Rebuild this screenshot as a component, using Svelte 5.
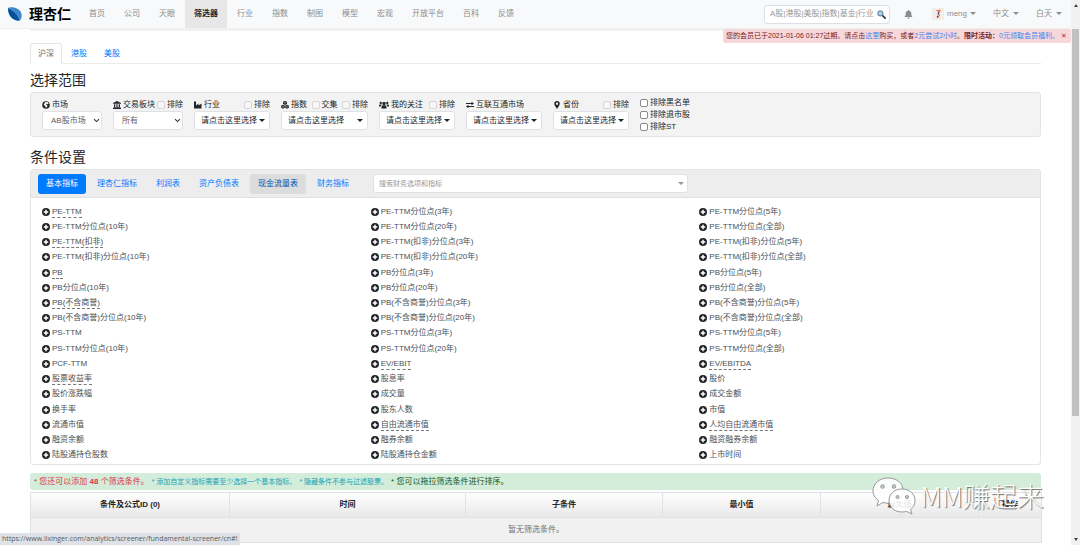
<script>
    const navItems = ['首页', '公司', '天眼', '筛选器', '行业', '指数', '制图', '模型', '宏观', '开放平台', '百科', '反馈'];
    const markets = ['沪深', '港股', '美股'];
    const groups = ['基本指标', '理杏仁指标', '利润表', '资产负债表', '现金流量表', '财务指标'];
    const placeholder = '请点击这里选择';

    const filters = [
        { id: 'market', icon: 'globe', label: '市场', checks: [], options: ['AB股市场', 'A股市场', 'B股市场'], size: 'w60' },
        { id: 'board', icon: 'bank', label: '交易板块', checks: ['排除'], options: ['所有', '主板', '创业板'], size: 'w70' },
        { id: 'industry', icon: 'industry', label: '行业', checks: ['排除'], size: 'w76' },
        { id: 'index', icon: 'cubes', label: '指数', checks: ['交集', '排除'], size: 'w87' },
        { id: 'follow', icon: 'users', label: '我的关注', checks: ['排除'], size: 'w76' },
        { id: 'connect', icon: 'exchange', label: '互联互通市场', checks: [], size: 'w76' },
        { id: 'province', icon: 'pin', label: '省份', checks: ['排除'], size: 'w76' }
    ];
    const excludes = ['排除黑名单', '排除退市股', '排除ST'];

    // a leading * marks an indicator that has a tooltip
    const indicators = [
        '*PE-TTM', 'PE-TTM分位点(3年)', 'PE-TTM分位点(5年)',
        'PE-TTM分位点(10年)', 'PE-TTM分位点(20年)', 'PE-TTM分位点(全部)',
        '*PE-TTM(扣非)', 'PE-TTM(扣非)分位点(3年)', 'PE-TTM(扣非)分位点(5年)',
        'PE-TTM(扣非)分位点(10年)', 'PE-TTM(扣非)分位点(20年)', 'PE-TTM(扣非)分位点(全部)',
        '*PB', 'PB分位点(3年)', 'PB分位点(5年)',
        'PB分位点(10年)', 'PB分位点(20年)', 'PB分位点(全部)',
        '*PB(不含商誉)', 'PB(不含商誉)分位点(3年)', 'PB(不含商誉)分位点(5年)',
        'PB(不含商誉)分位点(10年)', 'PB(不含商誉)分位点(20年)', 'PB(不含商誉)分位点(全部)',
        'PS-TTM', 'PS-TTM分位点(3年)', 'PS-TTM分位点(5年)',
        'PS-TTM分位点(10年)', 'PS-TTM分位点(20年)', 'PS-TTM分位点(全部)',
        'PCF-TTM', '*EV/EBIT', '*EV/EBITDA',
        '*股票收益率', '股息率', '股价',
        '股价涨跌幅', '成交量', '成交金额',
        '换手率', '股东人数', '市值',
        '流通市值', '*自由流通市值', '*人均自由流通市值',
        '融资余额', '融券余额', '融资融券余额',
        '陆股通持仓股数', '陆股通持仓金额', '上市时间'
    ];

    const columns = ['条件及公式ID (0)', '时间', '子条件', '最小值', '最大值', '操作'];

    let market = $state('沪深');
    let group = $state('基本指标');
    let showAlert = $state(true);
</script>

{#snippet icon(name)}
    <svg class="icon" class:wide={name === 'users'} viewBox="0 0 16 16" aria-hidden="true">
        {#if name === 'globe'}
            <circle cx="8" cy="8" r="7.6" />
            <path d="M7 2l4 0 2.500 3-2 1.500-2-1-1.500 2 3 1.500-1 3-2.500 2-1-4-3-2 1-3z" fill="#f3f3f3" />
        {:else if name === 'bank'}
            <path d="M8 0l8 4v1.500H0V4zM2 6.500h2.500V12h1.500V6.500h4V12h1.500V6.500H14V12h1v1.500H1V12h1zM7.200 7v5h1.600V7zM0 14h16v2H0z" />
        {:else if name === 'industry'}
            <path d="M0 1h4v8l5-4v4l6-4v10H0z" />
        {:else if name === 'cubes'}
            <path d="M8 0l4 1.700v4.500L8 8 4 6.200V1.700zM4 7.300L7.600 9v4.700L4 15.500.3 13.700V9zM12 7.300L15.700 9v4.700L12 15.500l-3.600-1.800V9z" />
            <path d="M5 2.200l3 1.300 3-1.300M8 3.500V7M1.300 9.500L4 10.800l2.700-1.300M4 10.800V14M9.300 9.500l2.700 1.300 2.700-1.300M12 10.800V14" fill="none" stroke="#f3f3f3" stroke-width=".7" />
        {:else if name === 'users'}
            <circle cx="8" cy="5" r="3.300" />
            <path d="M3 15v-3q0-3 3-3.500h4q3 .5 3 3.500v3z" />
            <circle cx="1.500" cy="4" r="2.300" />
            <circle cx="14.500" cy="4" r="2.300" />
            <path d="M-2 11V8.500Q-1.500 7 0 7h3.500Q1.500 9 1.500 11zM18 11V8.500Q17.500 7 16 7h-3.500q2 2 2 4z" />
        {:else if name === 'exchange'}
            <path d="M0 4h11V1.500L16 5l-5 3.500V6H0zM16 10H5V7.500L0 11l5 3.500V12h11z" />
        {:else if name === 'pin'}
            <path fill-rule="evenodd" d="M8 0a5.500 5.500 0 0 1 5.500 5.500C13.500 9 9.500 13 8 16 6.500 13 2.500 9 2.500 5.500A5.500 5.500 0 0 1 8 0zm0 3.200a2.300 2.300 0 1 0 0 4.600 2.300 2.300 0 0 0 0-4.600z" />
        {:else if name === 'plus'}
            <path fill-rule="evenodd" d="M8 0a8 8 0 1 0 0 16A8 8 0 0 0 8 0zM6.500 3.500h3v3h3v3h-3v3h-3v-3h-3v-3h3z" />
        {:else if name === 'bell'}
            <path d="M7 0h2v1.500c3 .6 4 2.500 4 5 0 3 .8 4.500 2.500 6H.5C2.200 11 3 9.500 3 6.500c0-2.500 1-4.400 4-5zM6 13.500h4q-.5 2.500-2 2.500t-2-2.500z" />
        {/if}
    </svg>
{/snippet}

{#snippet check(id, label, disabled)}
    <span class="check">
        <input type="checkbox" {id} {disabled} />
        <label for={id}>{label}</label>
    </span>
{/snippet}

<div class="window">
    <div class="page">
        <header>
            <a class="brand" href="#home">
                <svg class="logo" viewBox="0 0 16 16" aria-hidden="true">
                    <path d="M0 1C6-1 14 2 15.500 8c.5 3-.5 6-2 7.500C6 16 0 10 0 1z" fill="#3987cc" />
                    <path d="M0 1c0 9 5 14.500 13.500 14.500C12 9 7 4 0 1z" fill="#07509a" />
                    <path d="M0 1c7 3 12 8 13.500 14.500" fill="none" stroke="#8fbde5" stroke-width=".5" />
                </svg>
                理杏仁
            </a>
            <nav>
                {#each navItems as item}
                    <a href="#nav" class:active={item === '筛选器'}>{item}</a>
                {/each}
            </nav>
            <div class="tools">
                <div class="search">
                    <input type="text" aria-label="搜索" placeholder="A股|港股|美股|指数|基金|行业" />
                    <svg viewBox="0 0 16 16" aria-hidden="true">
                        <path d="M9.500 9.500l5 5" stroke="#273746" stroke-width="3" stroke-linecap="round" />
                        <circle cx="6" cy="6" r="4.700" fill="#a3d0ef" stroke="#49647a" stroke-width="1.500" />
                    </svg>
                </div>
                <button class="bell" aria-label="通知">{@render icon('bell')}</button>
                <button class="user">
                    <svg class="avatar" viewBox="0 0 24 24" aria-hidden="true">
                        <rect width="24" height="24" fill="#f1eeea" />
                        <path d="M9 5l6 1-2 6 2 3-4 5M13 8l4-3" fill="none" stroke="#d84a35" stroke-width="2" />
                        <path d="M13 8l-1 5M10 19l2-4" stroke="#3d3778" stroke-width="2" />
                        <circle cx="16" cy="5" r="2" fill="#e99a38" />
                    </svg>
                    meng<i class="caret"></i>
                </button>
                <button class="spaced">中文<i class="caret"></i></button>
                <button class="spaced">白天<i class="caret"></i></button>
            </div>
        </header>

        <div class="notice">
            <div class="strip"></div>
            {#if showAlert}
                <div class="alert" role="alert">
                    <span>您的会员已于2021-01-06 01:27过期。请点击<a href="#buy">这里</a>购买，或者<a href="#try">2元尝试2小时</a>。<b>限时活动：</b><a href="#free">0元领取会员福利。</a></span>
                    <button aria-label="关闭" onclick={() => (showAlert = false)}>✕</button>
                </div>
            {/if}
        </div>

        <main>
            <div class="tabs">
                {#each markets as item}
                    <button class:active={item === market} onclick={() => (market = item)}>{item}</button>
                {/each}
            </div>

            <h2>选择范围</h2>
            <section class="filters">
                {#each filters as f}
                    <div class="filter {f.size}">
                        <div class="filter-head">
                            <label class="name" for={f.id}>{@render icon(f.icon)}{f.label}</label>
                            {#each f.checks as c, i}
                                {@render check(`${f.id}-${i}`, c, true)}
                            {/each}
                        </div>
                        {#if f.options}
                            <div class="select">
                                <select id={f.id}>
                                    {#each f.options as o}
                                        <option>{o}</option>
                                    {/each}
                                </select>
                                <svg viewBox="0 0 10 10" aria-hidden="true"><path d="M1.500 3L5 6.500 8.500 3" /></svg>
                            </div>
                        {:else}
                            <button class="picker" id={f.id}><span>{placeholder}</span><i class="caret"></i></button>
                        {/if}
                    </div>
                {/each}
                <div class="excludes">
                    {#each excludes as e, i}
                        {@render check(`exclude-${i}`, e, false)}
                    {/each}
                </div>
            </section>

            <h2>条件设置</h2>
            <section class="card">
                <div class="card-head">
                    <div class="pills">
                        {#each groups as g}
                            <button class:active={g === group} class:hover={g === '现金流量表'} onclick={() => (group = g)}>{g}</button>
                        {/each}
                    </div>
                    <div class="combo">
                        <input type="text" aria-label="搜索财务选项和指标" placeholder="搜索财务选项和指标" />
                        <i class="caret"></i>
                    </div>
                </div>
                <ul class="indicators">
                    {#each indicators as item}
                        <li>
                            {@render icon('plus')}
                            <a href="#add" class:tip={item[0] === '*'}>{item.replace('*', '')}</a>
                        </li>
                    {/each}
                </ul>
            </section>

            <div class="tips">
                <span class="danger">* 您还可以添加 <b>48</b> 个筛选条件。</span>
                <span class="info">* 添加自定义指标需要至少选择一个基本指标。</span>
                <span class="info">* 隐藏条件不参与过滤股票。</span>
                <span>* 您可以拖拉筛选条件进行排序。</span>
            </div>

            <table>
                <colgroup>
                    <col class="c-name" />
                    <col class="c-time" />
                    <col class="c-sub" />
                    <col class="c-value" />
                    <col class="c-value" />
                    <col class="c-action" />
                </colgroup>
                <thead>
                    <tr>
                        {#each columns as c}
                            <th>{c}</th>
                        {/each}
                    </tr>
                </thead>
                <tbody>
                    <tr><td colspan="6">暂无筛选条件。</td></tr>
                </tbody>
            </table>
        </main>
    </div>

    <div class="scrollbar" aria-hidden="true">
        <i class="arrow up"></i>
        <div class="thumb"></div>
        <i class="arrow"></i>
    </div>

    <div class="status">https://www.lixinger.com/analytics/screener/fundamental-screener/cn#!</div>

    <div class="watermark">
        <svg viewBox="0 0 44 38" aria-hidden="true">
            <path d="M16 1C7 1 1 7 1 14c0 4 2 7 5.500 9.500L5 29l6-3.500c2 .5 3.500.7 5.500.7C25 26 31 20.500 31 13.500S25 1 16 1z" />
            <path d="M30 12c-7.500 0-13 5-13 11.500S22.500 35 30 35c1.500 0 3-.2 4.500-.7L40 37l-1.500-4.500c3-2.200 4.500-5.200 4.500-9C43 17 37.500 12 30 12z" />
            <g class="eyes">
                <circle cx="10.500" cy="9.500" r="1.800" />
                <circle cx="22" cy="9.500" r="1.800" />
                <circle cx="25.500" cy="20" r="1.500" />
                <circle cx="35" cy="20" r="1.500" />
            </g>
        </svg>
        MM赚起来
    </div>
</div>

<style>
    :global(body) {
        margin: 0;
        background: #fff;
    }
    .window, .window * {
        box-sizing: border-box;
    }
    .window {
        position: relative;
        display: flex;
        height: 100vh;
        overflow: hidden;
        font: 8px/12px "Liberation Sans", "Noto Sans CJK SC", sans-serif;
        color: #212529;
        white-space: nowrap;
    }
    .window button, .window input, .window select {
        margin: 0;
        padding: 0;
        font: inherit;
        color: inherit;
        background: none;
        border: 0;
    }
    .window a {
        color: inherit;
        text-decoration: none;
    }
    .page {
        flex: 1;
        min-width: 0;
    }
    .icon {
        flex: none;
        width: 8px;
        height: 8px;
        fill: currentColor;
        overflow: visible;
    }
    .icon.wide {
        margin: 0 1px;
    }
    .caret {
        display: inline-block;
        border: 3px solid transparent;
        border-top-color: currentColor;
        border-bottom: 0;
    }

    /* top bar */
    header {
        display: flex;
        align-items: center;
        height: 28px;
        padding: 0 10px 0 8px;
        background: #f8f9fa;
        color: #8c8d8e;
    }
    .window .brand {
        display: flex;
        align-items: center;
        gap: 7px;
        margin-right: 9px;
        font-size: 14px;
        font-weight: bold;
        color: #000;
    }
    .logo {
        width: 14px;
        height: 14px;
    }
    nav {
        display: flex;
        gap: 1px;
    }
    nav a {
        padding: 0 9px;
        line-height: 28px;
    }
    .window nav a.active {
        background: #e7e7e7;
        color: #222;
        font-weight: bold;
    }
    .tools {
        display: flex;
        align-items: center;
        margin-left: auto;
    }
    .search {
        display: flex;
        align-items: center;
        width: 126px;
        height: 19px;
        padding: 0 3px 0 5px;
        background: #fff;
        border: 1px solid #dcdfe3;
        border-radius: 3px;
    }
    .search input {
        flex: 1;
        min-width: 0;
    }
    .search svg {
        width: 9px;
        height: 9px;
    }
    input::placeholder {
        color: #999;
        opacity: 1;
    }
    .window .bell {
        margin: 0 19px 0 14px;
    }
    .bell .icon {
        width: 9px;
        height: 9px;
    }
    .tools button {
        display: flex;
        align-items: center;
        gap: 3px;
    }
    .window .tools .spaced {
        gap: 4px;
        margin-left: 18px;
    }
    .tools .caret {
        border-width: 3px 3px 0;
        margin: 0 -1px 2px 0;
    }
    .avatar {
        width: 12px;
        height: 12px;
    }

    .notice {
        display: flex;
        height: 15px;
        border-top: 1px solid #eee;
    }
    .strip {
        flex: 1;
        height: 2px;
        margin-left: 30px;
        background: #f2f2f2;
    }
    .alert {
        display: flex;
        align-items: center;
        gap: 2px;
        padding: 0 4px 0 3px;
        background: #f8d7da;
        border-radius: 2px;
        color: #721c24;
        font-size: 7px;
    }
    .window .alert a {
        color: #3a86ee;
    }
    .window .alert button {
        color: #a8333d;
    }

    main {
        padding: 0 30px;
    }
    .tabs {
        display: flex;
        gap: 1px;
        height: 21px;
        border-bottom: 1px solid #e9ebed;
    }
    .window .tabs button {
        height: 21px;
        padding: 0 7px;
        border: 1px solid transparent;
        border-radius: 3px 3px 0 0;
        color: #007bff;
    }
    .window .tabs button.active {
        background: #fff;
        border-color: #e3e5e8;
        border-bottom-color: #fff;
        color: #6c6f73;
    }
    h2 {
        margin: 0;
        padding: 8px 0 3px;
        font-size: 14px;
        line-height: 17px;
        font-weight: 400;
    }

    /* range filters */
    .filters {
        display: flex;
        gap: 11px;
        height: 45px;
        margin-bottom: 4px;
        padding: 4px 11px;
        background: #f3f3f3;
        border: 1px solid #e4e4e4;
        border-radius: 3px;
    }
    .filter {
        padding-top: 1px;
    }
    .w60 {
        width: 60px;
    }
    .w70 {
        width: 70px;
    }
    .w76 {
        width: 76px;
    }
    .w87 {
        width: 87px;
    }
    .filter-head {
        display: flex;
        justify-content: space-between;
        height: 13px;
    }
    .name {
        display: flex;
        align-items: center;
        gap: 2px;
    }
    .check {
        display: flex;
        align-items: center;
        gap: 2px;
    }
    .window .check input {
        appearance: none;
        width: 8px;
        height: 8px;
        background: #fff;
        border: 1px solid #8a8a8a;
        border-radius: 2px;
    }
    .window .check input:disabled {
        background: #f7f7f7;
        border-color: #d6d6d6;
    }
    .select {
        display: grid;
        align-items: center;
    }
    .select > * {
        grid-area: 1 / 1;
    }
    .window .select select, .window .picker {
        width: 100%;
        height: 19px;
        background: #fff;
        border: 1px solid #dfe2e5;
        border-radius: 3px;
    }
    .window .select select {
        appearance: none;
        padding: 0 8px;
        color: #5c6268;
    }
    .select svg {
        justify-self: end;
        width: 7px;
        height: 7px;
        margin-right: 2px;
        fill: none;
        stroke: #333;
        stroke-width: 1.5;
        pointer-events: none;
    }
    .window .picker {
        display: flex;
        align-items: center;
        justify-content: space-between;
        padding: 0 4px 0 6px;
    }
    .excludes .check {
        height: 12px;
    }

    /* indicator card */
    .card {
        border: 1px solid #e4e4e4;
        border-radius: 3px;
    }
    .card-head {
        display: flex;
        align-items: center;
        gap: 16px;
        height: 28px;
        padding: 0 7px;
        background: #ededed;
        border-bottom: 1px solid #e0e0e0;
    }
    .pills {
        display: flex;
        gap: 3px;
    }
    .window .pills button {
        height: 20px;
        padding: 0 8px;
        border-radius: 3px;
        color: #007bff;
    }
    .window .pills button.hover {
        background: #dcdcdc;
        color: #0056b3;
    }
    .window .pills button.active {
        background: #007bff;
        color: #fff;
    }
    .combo {
        display: flex;
        align-items: center;
        width: 315px;
        height: 19px;
        padding: 0 3px 0 5px;
        background: #fff;
        border: 1px solid #dfe2e5;
        border-radius: 3px;
        font-size: 7px;
        color: #999;
    }
    .combo input {
        flex: 1;
        min-width: 0;
    }
    .indicators {
        display: grid;
        grid-template-columns: repeat(3, 1fr);
        grid-auto-rows: 1fr;
        height: 266px;
        margin: 0;
        padding: 6px 12px 1px 11px;
        list-style: none;
    }
    .indicators li {
        display: flex;
        align-items: center;
        gap: 2px;
    }
    .indicators a {
        padding-top: 1px;
        line-height: 10px;
        color: #495057;
        border-bottom: 1px solid transparent;
    }
    .indicators a.tip {
        border-bottom: 1px dashed #777;
    }

    .tips {
        display: flex;
        align-items: center;
        gap: 3px;
        height: 17px;
        margin: 8px 0 2px;
        padding: 0 4px;
        background: #d4edda;
        border-radius: 3px;
        color: #155724;
    }
    .danger {
        color: #dc3545;
    }
    .info {
        color: #17a2b8;
        font-size: 7px;
    }

    table {
        width: 100%;
        table-layout: fixed;
        border-collapse: collapse;
        border: 1px solid #dee2e6;
    }
    .c-name {
        width: 199px;
    }
    .c-time {
        width: 236px;
    }
    .c-sub {
        width: 197px;
    }
    .c-value {
        width: 158px;
    }
    .c-action {
        width: 63px;
    }
    th, td {
        height: 25px;
        padding: 0;
        text-align: center;
    }
    th {
        border-right: 1px solid #e0e3e6;
    }
    thead tr {
        background: linear-gradient(#fff, #e8e8e8);
        border-bottom: 1px solid #dee2e6;
    }
    td {
        background: #f1f1f1;
        color: #6c757d;
    }

    .scrollbar {
        display: flex;
        flex-direction: column;
        align-items: center;
        justify-content: space-between;
        width: 9px;
        padding: 4px 0;
        background: #f1f1f1;
    }
    .thumb {
        flex: none;
        width: 7px;
        height: 72%;
        margin: 22px 0 auto;
        background: #c1c1c1;
    }
    .arrow {
        border: 2px solid transparent;
        border-top: 3px solid #444;
        border-bottom: 0;
    }
    .arrow.up {
        transform: rotate(180deg);
    }
    .status {
        position: absolute;
        left: 0;
        bottom: 0;
        padding: 0 2px 0 2px;
        background: #dee1e6;
        border-radius: 0 2px 0 0;
        color: #555b61;
        font-family: "Open Sans", sans-serif;
        font-size: 7px;
    }
    .watermark {
        position: absolute;
        right: 36px;
        bottom: 30px;
        display: flex;
        align-items: center;
        gap: 5px;
        font: 300 27px/38px "Noto Sans CJK SC", sans-serif;
        color: #fff;
        text-shadow: 1px 1px 1px #666;
        pointer-events: none;
    }
    .watermark svg {
        width: 44px;
        height: 38px;
        fill: #fff;
        fill-opacity: .9;
        stroke: #999;
        stroke-width: 1;
    }
    .eyes {
        fill: #b9c7bd;
    }
</style>
